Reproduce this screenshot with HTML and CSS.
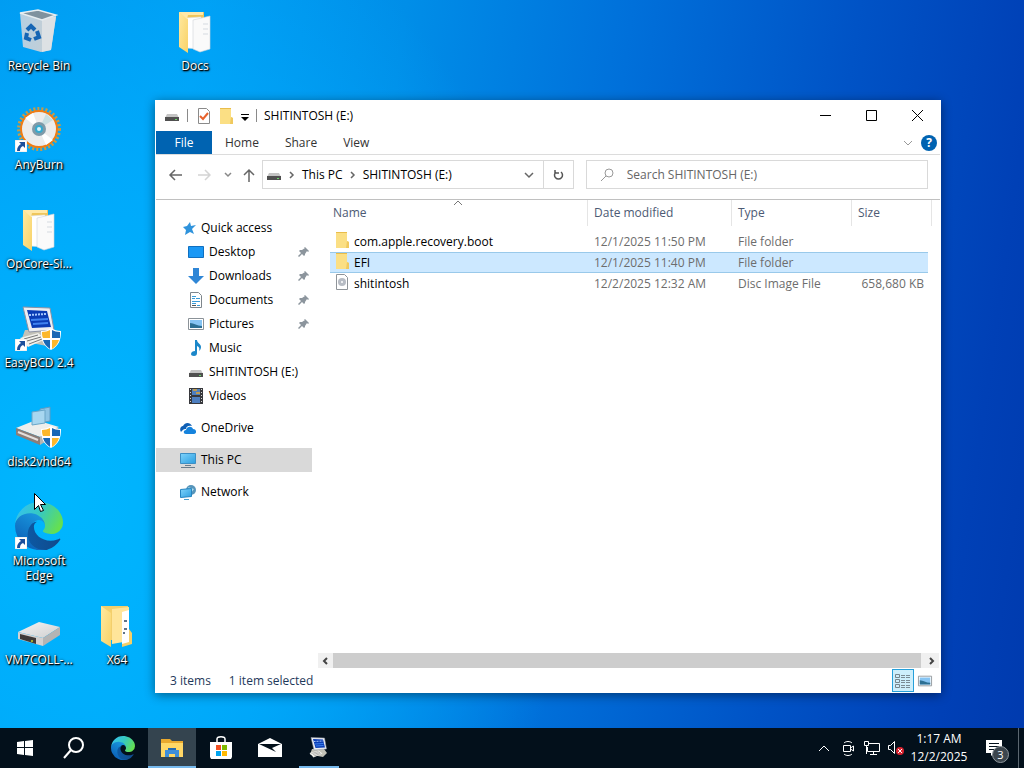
FILE: index.html
```html
<!DOCTYPE html>
<html lang="en">
<head>
    <meta charset="UTF-8">
    <meta name="viewport" content="width=device-width, initial-scale=1.0">
    <title>SHITINTOSH (E:)</title>
    <link rel="stylesheet" href="styles.css">
</head>
<body>

    <!-- Shared icons -->
    <svg class="sprite" aria-hidden="true">
        <defs>
            <linearGradient id="edgeBase" x1="0" y1="0" x2="1" y2="0"><stop offset="0" stop-color="#0c59a4"/><stop offset="1" stop-color="#114a8b"/></linearGradient>
            <linearGradient id="edgeLeft" x1="0.8" y1="0" x2="0.3" y2="1"><stop offset="0" stop-color="#1b9de2"/><stop offset="1" stop-color="#0a5db5"/></linearGradient>
            <linearGradient id="edgeTop" x1="0" y1="0.2" x2="1" y2="0.6"><stop offset="0" stop-color="#35c1f1"/><stop offset="0.5" stop-color="#36c9c0"/><stop offset="1" stop-color="#66e04e"/></linearGradient>
            <linearGradient id="folderFill" x1="0" y1="0" x2="1" y2="1"><stop offset="0" stop-color="#ffe9a0"/><stop offset="1" stop-color="#f8d267"/></linearGradient>
            <linearGradient id="binFill" x1="0" y1="0" x2="1" y2="0"><stop offset="0" stop-color="#b4cfe2"/><stop offset="1" stop-color="#c9ced1"/></linearGradient>
            <linearGradient id="screenFill" x1="0" y1="0" x2="1" y2="1"><stop offset="0" stop-color="#7fd3fb"/><stop offset="1" stop-color="#2b9ee0"/></linearGradient>
            <linearGradient id="driveTop" x1="0" y1="0" x2="1" y2="1"><stop offset="0" stop-color="#f4f4f4"/><stop offset="1" stop-color="#cfcfcf"/></linearGradient>
        </defs>

        <symbol id="edge" viewBox="0 0 256 256">
            <path fill="url(#edgeBase)" d="M235.7 195.5a93.7 93.7 0 0 1-10.6 4.7 101.9 101.9 0 0 1-35.9 6.4c-47.3 0-88.5-32.5-88.5-74.3a31.5 31.5 0 0 1 16.4-27.3c-42.8 1.8-53.8 46.4-53.8 72.5 0 74 68.1 81.4 82.8 81.4 7.9 0 19.8-2.3 27-4.6l1.3-.4a128.3 128.3 0 0 0 66.6-52.8 4 4 0 0 0-5.3-5.6z"/>
            <path fill="url(#edgeLeft)" d="M105.7 241.4a79.2 79.2 0 0 1-22.7-21.3 80.7 80.7 0 0 1 29.5-120c3.2-1.5 8.5-4.1 15.6-4a32.4 32.4 0 0 1 25.7 13 31.9 31.9 0 0 1 6.3 18.7c0-.2 24.5-79.6-80-79.6-43.9 0-80 41.6-80 78.2a130.2 130.2 0 0 0 12.1 56 128 128 0 0 0 156.4 67 75.5 75.5 0 0 1-62.8-8z"/>
            <path fill="url(#edgeTop)" d="M152.3 148.9c-.9 1-3.4 2.5-3.4 5.6 0 2.6 1.7 5.2 4.8 7.3 14.3 10 41.4 8.6 41.5 8.6a59.6 59.6 0 0 0 30.3-8.3 61.4 61.4 0 0 0 30.4-52.9c.3-22.4-8-37.3-11.3-43.9C223.5 23.9 177.7 0 128 0A128 128 0 0 0 0 126.2c.5-36.5 36.8-66 80-66 3.5 0 23.5.3 42 10a72.6 72.6 0 0 1 30.9 29.3c6.1 10.6 7.2 24.1 7.2 29.5s-2.7 13.3-7.8 19.9z"/>
        </symbol>
        <symbol id="shortcut" viewBox="0 0 12 12">
            <path fill="#fff" stroke="#c8c8c8" stroke-width="0.5" d="M0 0h12v12H0z"/>
            <path fill="#1c4f9c" d="M4 2h6v6L8 6C6 7 5 8 5 11H2C2 7 4 5 6 4z"/>
        </symbol>
        <symbol id="shield" viewBox="0 0 20 22">
            <path fill="#fff" d="M10 0c3 2 6 3 10 3 0 9-2 15-10 19C2 18 0 12 0 3c4 0 7-1 10-3z"/>
            <path fill="#1967b5" d="M11 2v8h8V4c-3 0-6-1-8-2zM9 12H2c1 4 4 7 7 9z"/>
            <path fill="#fcb72b" d="M9 2v8H2C1 8 1 6 1 4c3 0 6-1 8-2zM11 12h7c-1 4-4 7-7 9z"/>
        </symbol>
        <symbol id="doc-folder" viewBox="0 0 48 48">
            <path fill="#efc65c" d="M8 5h25v6H8z"/>
            <path fill="#fff" stroke="#dfe3e6" stroke-width="0.6" d="M15 11l15-1v32l-15-1z"/>
            <path fill="#fafafa" stroke="#d0d4d8" stroke-width="0.6" d="M22 13l17-4v33l-10 3-7-3z"/>
            <path stroke="#d5dae0" d="M32 17h5M32 22h5M32 27h5"/>
            <path fill="url(#folderFill)" d="M8 5l9 7v34l-9-6z"/>
            <path fill="#ffe9a8" d="M8 5h24v3H17l-1 4z"/>
        </symbol>
        <symbol id="small-folder" viewBox="0 0 16 16">
            <path fill="#e9bd4b" d="M2 0h11v15H2z"/>
            <path fill="#fbdf84" d="M2 1h11v8l2 1v6H2z"/>
            <path fill="#f0c95e" d="M13 9l2 1v6h-3z"/>
        </symbol>
        <symbol id="small-drive" viewBox="0 0 16 16">
            <path fill="#c4c4c4" d="M3 6h10l2 4H1z"/>
            <path fill="#505050" d="M1 9h14v4H1z"/>
            <path fill="#6bd86b" d="M11 11h2v1h-2z"/>
        </symbol>
        <symbol id="big-drive" viewBox="0 0 48 48">
            <path fill="url(#driveTop)" d="M3 31L24 21l21 5-17 11z"/>
            <path fill="#d4d1d0" d="M3 31l25 6v8L3 38z"/>
            <path fill="#3f3a38" d="M5 33l16 4v6L5 38z"/>
            <path fill="#b4b4b4" d="M28 37l17-11v8L28 45z"/>
            <circle cx="17" cy="40" r="1" fill="#c9d12e"/>
        </symbol>
        <symbol id="computer" viewBox="0 0 48 48">
            <path fill="#c3c2b8" d="M10 26h24l6 8-8 8-26-5z"/>
            <path fill="#f1f1ec" d="M5 34l18-5 8 6-18 8z"/>
            <path stroke="#777" d="M9 35l14-4M12 37l14-4M14 40l13-5"/>
            <path fill="#eceef2" stroke="#8b92a5" d="M8 3l27 1 4 22-25 2z"/>
            <path fill="#0a3cb5" d="M12 6l20 1 4 16-19 1z"/>
            <path stroke="#a9caff" stroke-width="2" stroke-dasharray="2 1" d="M14 11l17-1"/>
            <path stroke="#3f82f0" stroke-width="2" d="M16 16l17-1M18 20l15-1"/>
        </symbol>
        <symbol id="picture" viewBox="0 0 16 16">
            <path fill="#fff" stroke="#8b9298" d="M.5 2.500h15v11H.5z"/>
            <path fill="#86c4f3" d="M2 4h12v8H2z"/>
            <path fill="#2c6f93" d="M2 7c4 0 7 3 12 3v2H2z"/>
        </symbol>
        <symbol id="pin" viewBox="0 0 12 12">
            <path fill="#8c959d" d="M7 1l4 4-1 1-1-1-2 3v1l-1 1-2-2-3 3-1-1 3-3-2-2 1-1h2l3-2-1-1z"/>
        </symbol>
    </svg>

    <main class="desktop">
        <div class="desktop-icons">
            <button class="shortcut r1">
                <svg viewBox="0 0 48 48">
                    <path fill="url(#binFill)" d="M5 6l36 4-5 33-10 2-18-5z"/>
                    <path fill="#dde1e4" d="M27 13l14-4-5 34-9 2z"/>
                    <path fill="#7f929e" stroke="#e6edf0" stroke-width="1.500" d="M5 6l18-3 18 5-14 5z"/>
                    <g fill="none" stroke="#1565b4" stroke-width="4"><path d="M12 23l4-4 4 4M22 24l2 6-5 2M16 33l-5-2 1-5"/></g>
                </svg>
                <span>Recycle Bin</span>
            </button>
            <button class="shortcut r2">
                <svg viewBox="0 0 48 48">
                    <circle cx="24" cy="23" r="20" fill="none" stroke="#c99a45" stroke-width="4" stroke-dasharray="2 2"/>
                    <circle cx="24" cy="23" r="18" fill="#ececec" stroke="#f07c14" stroke-width="2"/>
                    <path fill="#fff" d="M24 23L10 12l8-5zM24 23l14 11-7 5z"/>
                    <path fill="#c9dfe2" d="M24 23l7-15 7 6z"/>
                    <circle cx="24" cy="23" r="7" fill="#7f9aa8"/>
                    <circle cx="24" cy="23" r="4" fill="#36a9cd"/>
                    <circle cx="24" cy="23" r="2" fill="#d8f2fa"/>
                    <use href="#shortcut" x="0" y="34" width="12" height="12"/>
                </svg>
                <span>AnyBurn</span>
            </button>
            <button class="shortcut r3">
                <svg><use href="#doc-folder"/></svg>
                <span>OpCore-Si...</span>
            </button>
            <button class="shortcut r4">
                <svg viewBox="0 0 48 48">
                    <use href="#computer" width="48" height="48"/>
                    <use href="#shield" x="26" y="24" width="20" height="22"/>
                    <use href="#shortcut" x="0" y="35" width="12" height="12"/>
                </svg>
                <span>EasyBCD 2.4</span>
            </button>
            <button class="shortcut r5">
                <svg viewBox="0 0 48 48">
                    <path fill="#eeeeec" d="M1 25l20-8 23 7-19 10z"/>
                    <path fill="#8b7d78" d="M1 25l24 9v8L1 32z"/>
                    <path stroke="#e5dfdc" stroke-width="2" d="M3 29l20 8"/>
                    <path fill="#b5b5b3" d="M25 34l18-10v7L25 42z"/>
                    <path fill="#8dc4e5" stroke="#5f9cc3" d="M25 6l10-2v14l-10 2z"/>
                    <path fill="#a8d7f0" stroke="#6aa6c8" d="M17 9l13-2v13l-13 2z"/>
                    <use href="#shield" x="26" y="23" width="20" height="22"/>
                </svg>
                <span>disk2vhd64</span>
            </button>
            <button class="shortcut r6">
                <svg viewBox="0 0 48 48">
                    <use href="#edge" width="48" height="48"/>
                    <use href="#shortcut" x="0" y="35" width="12" height="12"/>
                </svg>
                <span>Microsoft Edge</span>
            </button>
            <button class="shortcut r7">
                <svg><use href="#big-drive"/></svg>
                <span>VM7COLL-...</span>
            </button>
            <button class="shortcut r7 c2">
                <svg viewBox="0 0 48 48">
                    <path fill="#f3cf6c" d="M8 5h27v34H8z"/>
                    <path fill="#ffe59a" d="M19 8l17-2v34l-17 3z"/>
                    <path fill="#fff" d="M29 11l7-2v34l-7 2z"/>
                    <path stroke="#5f7388" stroke-width="2" d="M31 20h3M31 28h3M30 32h2"/>
                    <path fill="#f6cf67" d="M36 28l3 4v11l-10 3v-3l7-2z"/>
                    <path fill="url(#folderFill)" d="M8 5l10 7v34l-10-6z"/>
                </svg>
                <span>X64</span>
            </button>
            <button class="shortcut r1 c3">
                <svg><use href="#doc-folder"/></svg>
                <span>Docs</span>
            </button>
        </div>

        <section class="window" aria-label="SHITINTOSH (E:)">
            <header class="titlebar">
                <svg class="icon16"><use href="#small-drive"/></svg>
                <span class="divider"></span>
                <button class="quick" aria-label="Properties">
                    <svg viewBox="0 0 16 16"><path fill="#fff" stroke="#8a8a8a" d="M3.500.5h8l3 3v12h-11z"/><path fill="none" stroke="#e8622c" stroke-width="2" d="M5 8l3 3 5-6"/></svg>
                </button>
                <button class="quick" aria-label="New folder"><svg><use href="#small-folder"/></svg></button>
                <button class="quick narrow" aria-label="Customize Quick Access Toolbar">
                    <svg viewBox="0 0 8 16"><path d="M0 6h8v1H0zM0 9h8l-4 4z"/></svg>
                </button>
                <span class="divider"></span>
                <h1>SHITINTOSH (E:)</h1>
                <div class="window-buttons">
                    <button aria-label="Minimize"><svg viewBox="0 0 11 11"><path d="M0 5.500h11"/></svg></button>
                    <button aria-label="Maximize"><svg viewBox="0 0 11 11"><path d="M.5.5h10v10H.5z"/></svg></button>
                    <button aria-label="Close"><svg viewBox="0 0 11 11"><path d="M0 0l11 11M11 0L0 11"/></svg></button>
                </div>
            </header>

            <nav class="ribbon">
                <button class="file-tab">File</button>
                <button>Home</button>
                <button>Share</button>
                <button>View</button>
                <div class="ribbon-end">
                    <button aria-label="Expand the Ribbon"><svg class="chevron" viewBox="0 0 10 10"><path d="M1 3l4 4 4-4"/></svg></button>
                    <button class="help" aria-label="Help">?</button>
                </div>
            </nav>

            <div class="navbar">
                <div class="history">
                    <button aria-label="Back"><svg viewBox="0 0 16 16"><path d="M15 8H3M8 3L3 8l5 5"/></svg></button>
                    <button class="off" aria-label="Forward" disabled><svg viewBox="0 0 16 16"><path d="M3 8h12M10 3l5 5-5 5"/></svg></button>
                    <button class="recent" aria-label="Recent locations"><svg viewBox="0 0 16 16"><path d="M6 6l3 3 3-3"/></svg></button>
                    <button aria-label="Up"><svg viewBox="0 0 16 16"><path d="M8 15V3M3 8l5-5 5 5"/></svg></button>
                </div>
                <div class="address">
                    <svg class="icon16"><use href="#small-drive"/></svg>
                    <svg class="chevron" viewBox="0 0 10 10"><path d="M3 2l3 3-3 3"/></svg>
                    <button>This PC</button>
                    <svg class="chevron" viewBox="0 0 10 10"><path d="M3 2l3 3-3 3"/></svg>
                    <button>SHITINTOSH (E:)</button>
                    <button class="drop" aria-label="Previous locations"><svg class="chevron" viewBox="0 0 10 10"><path d="M1 3l4 4 4-4"/></svg></button>
                    <button class="refresh" aria-label="Refresh"><svg viewBox="0 0 14 14"><path d="M5 4a4 4 0 1 0 5 0M4 2v3h4"/></svg></button>
                </div>
                <label class="search">
                    <svg viewBox="0 0 16 16"><circle cx="10" cy="6" r="4"/><path d="M7 9l-5 5"/></svg>
                    <input type="text" placeholder="Search SHITINTOSH (E:)" aria-label="Search SHITINTOSH (E:)">
                </label>
            </div>

            <div class="content">
                <ul class="sidebar">
                    <li>
                        <svg viewBox="0 0 16 16"><path fill="#2f93dc" d="M10 2l1 4 5-1-4 4 2 5-4-2-5 3 1-5-3-3 4-1z"/></svg>
                        <a href="#">Quick access</a>
                    </li>
                    <li class="child">
                        <svg viewBox="0 0 16 16"><path fill="#1a98f5" stroke="#0f6fc0" d="M.5 2.500h15v11H.5z"/></svg>
                        <a href="#">Desktop</a><svg class="pin"><use href="#pin"/></svg>
                    </li>
                    <li class="child">
                        <svg viewBox="0 0 16 16"><path fill="#2f86d6" d="M5 0h6v8h5l-8 8-8-8h5z"/></svg>
                        <a href="#">Downloads</a><svg class="pin"><use href="#pin"/></svg>
                    </li>
                    <li class="child">
                        <svg viewBox="0 0 16 16"><path fill="#fff" stroke="#7e868c" d="M2.500.5h8l3 3v12h-11z"/><path stroke="#3b9cd8" d="M4 4.500h4M8 6.500h4M4 6.500h3M4 9.500h8M4 11.500h4M9 13.500h3"/><path fill="#555" d="M4 13h4v1H4z"/></svg>
                        <a href="#">Documents</a><svg class="pin"><use href="#pin"/></svg>
                    </li>
                    <li class="child">
                        <svg><use href="#picture"/></svg>
                        <a href="#">Pictures</a><svg class="pin"><use href="#pin"/></svg>
                    </li>
                    <li class="child">
                        <svg viewBox="0 0 16 16"><path fill="#1b87c9" d="M7 0h2c0 3 4 4 4 7 0 2-1 3-2 4 1-3 0-4-2-5v7c0 2-1 3-3 3s-3-1-3-2c0-2 2-3 4-3z"/></svg>
                        <a href="#">Music</a>
                    </li>
                    <li class="child">
                        <svg><use href="#small-drive"/></svg>
                        <a href="#">SHITINTOSH (E:)</a>
                    </li>
                    <li class="child">
                        <svg viewBox="0 0 16 16"><path fill="#37383c" d="M1 0h14v16H1z"/><path fill="#4d7ec0" d="M4 1h8v6H4zM4 9h8v6H4z"/><path fill="#bb9b55" d="M5 1h4v2H5zM8 4h4v2H8z"/><path stroke="#d6d6d6" stroke-dasharray="1 2" d="M2.500 1v15M13.500 1v15"/></svg>
                        <a href="#">Videos</a>
                    </li>
                    <li class="group">
                        <svg viewBox="0 0 16 16"><path fill="#0e5fb5" d="M1 12c-2-3 0-6 2-6 2-4 7-4 9 0-4-1-6 1-6 3-3 0-3 1-5 3z"/><path fill="#1583dd" d="M6 14c-3 0-3-4 0-4 1-4 6-4 7-1 4 0 4 5 1 5z"/></svg>
                        <a href="#">OneDrive</a>
                    </li>
                    <li class="group current">
                        <svg viewBox="0 0 16 16"><path fill="url(#screenFill)" stroke="#3d8fc4" d="M.5 1.500h15v10H.5z"/><path stroke="#687c8c" d="M5 13.500h6M1 15.500h14"/></svg>
                        <a href="#">This PC</a>
                    </li>
                    <li class="group">
                        <svg viewBox="0 0 16 16"><circle cx="11" cy="6" r="5" fill="#5795ba"/><path fill="#b2ddee" d="M8 3l6 2-3 4z"/><path fill="url(#screenFill)" stroke="#2684c0" d="M.5 5.500l11-1v8l-11 1z"/><path stroke="#4a9ed0" d="M4 15.500h5"/></svg>
                        <a href="#">Network</a>
                    </li>
                </ul>

                <div class="files">
                    <table>
                        <colgroup>
                            <col>
                            <col class="col-date">
                            <col class="col-type">
                            <col class="col-size">
                            <col class="col-end">
                        </colgroup>
                        <thead>
                            <tr>
                                <th>Name<svg class="sort" viewBox="0 0 10 6"><path d="M1 5l4-4 4 4"/></svg></th>
                                <th>Date modified</th>
                                <th>Type</th>
                                <th colspan="2">Size</th>
                            </tr>
                        </thead>
                        <tbody>
                            <tr>
                                <td><svg><use href="#small-folder"/></svg>com.apple.recovery.boot</td>
                                <td>12/1/2025 11:50 PM</td>
                                <td>File folder</td>
                                <td></td>
                                <td></td>
                            </tr>
                            <tr class="selected">
                                <td><svg><use href="#small-folder"/></svg>EFI</td>
                                <td>12/1/2025 11:40 PM</td>
                                <td>File folder</td>
                                <td></td>
                                <td></td>
                            </tr>
                            <tr>
                                <td><svg viewBox="0 0 16 16"><path fill="#fff" stroke="#8f9499" d="M2.500.5h8l3 3v12h-11z"/><circle cx="8" cy="8" r="4" fill="#b7bcc4"/><circle cx="8" cy="8" r="1" fill="#fff"/></svg>shitintosh</td>
                                <td>12/2/2025 12:32 AM</td>
                                <td>Disc Image File</td>
                                <td>658,680 KB</td>
                                <td></td>
                            </tr>
                        </tbody>
                    </table>
                    <div class="scrollbar">
                        <button aria-label="Scroll left"><svg viewBox="0 0 10 10"><path d="M6 2L3 5l3 3"/></svg></button>
                        <div class="thumb"></div>
                        <button aria-label="Scroll right"><svg viewBox="0 0 10 10"><path d="M3 2l3 3-3 3"/></svg></button>
                    </div>
                </div>
            </div>

            <footer class="statusbar">
                <span>3 items</span>
                <span>1 item selected</span>
                <div class="views">
                    <button class="active" aria-label="Details view">
                        <svg viewBox="0 0 16 14"><path fill="none" stroke="#77858c" d="M.5.5h4v3h-4zM.5 5.500h4v3h-4zM.5 10.500h4v3h-4z"/><path stroke="#7b8b94" stroke-dasharray="4 1" d="M6 1.500h10M6 3.500h10M6 6.500h10M6 8.500h10M6 11.500h10M6 13.500h10"/></svg>
                    </button>
                    <button aria-label="Large icons view"><svg><use href="#picture"/></svg></button>
                </div>
            </footer>
        </section>

        <svg class="cursor" viewBox="0 0 12 19" aria-hidden="true"><path fill="#fff" stroke="#000" d="M.5.5v16l4-4 2 6 3-1-3-6h5z"/></svg>
    </main>

    <footer class="taskbar">
        <button aria-label="Start"><svg viewBox="0 0 16 16"><path fill="#fff" d="M0 2l7-1v6H0zM8 1l8-1v7H8zM0 8h7v7l-7-1zM8 8h8v8l-8-1z"/></svg></button>
        <button class="large" aria-label="Search"><svg viewBox="0 0 24 24"><circle cx="14" cy="9" r="7" fill="none" stroke="#fff" stroke-width="2"/><path stroke="#fff" stroke-width="2" d="M9 14l-7 8"/></svg></button>
        <button class="large" aria-label="Microsoft Edge"><svg><use href="#edge"/></svg></button>
        <button class="large current" aria-label="File Explorer">
            <svg viewBox="0 0 24 24"><path fill="#e9a92e" d="M1 3h9l2 2h11v16H1z"/><path fill="#ffd766" d="M1 7h22v14H1z"/><path fill="#3f8fdb" d="M5 14h14v7h-4v-3H9v3H5z"/><path fill="#2469b0" d="M8 12h8v2H8z"/></svg>
        </button>
        <button class="large" aria-label="Microsoft Store">
            <svg viewBox="0 0 24 24"><path fill="none" stroke="#fff" stroke-width="1.500" d="M8 6V3c0-3 8-3 8 0v3"/><path fill="#fff" d="M1 6h22v15l-1 2H2l-1-2z"/><path fill="#f25022" d="M7 9h5v5H7z"/><path fill="#7fba00" d="M13 9h5v5h-5z"/><path fill="#00a4ef" d="M7 15h5v5H7z"/><path fill="#ffb900" d="M13 15h5v5h-5z"/></svg>
        </button>
        <button class="large" aria-label="Mail"><svg viewBox="0 0 24 24"><path fill="#fff" d="M0 8l12-6 12 6v13H0z"/><path fill="#03101b" d="M1 8h22l-9 4 4 4z"/></svg></button>
        <button class="large open" aria-label="EasyBCD"><svg><use href="#computer"/></svg></button>

        <div class="tray">
            <button aria-label="Show hidden icons"><svg viewBox="0 0 16 16"><path d="M3 11l5-5 5 5"/></svg></button>
            <button aria-label="Meet Now"><svg viewBox="0 0 16 16"><path d="M3.500 5.500h7v6h-7zM10.500 8l3-2v5l-3-2M4 3c2-2 6-2 8 0M4 14c2 2 6 2 8 0"/></svg></button>
            <button aria-label="Network"><svg viewBox="0 0 16 16"><path d="M5 3.500h10.500v8H3.500V7M6 14.500h7M9.500 12v2M.5 1.500h4v4h-4zM2.500 6v8"/></svg></button>
            <button aria-label="Volume">
                <svg viewBox="0 0 16 16"><path d="M.5 5.500h2l4-4v12l-4-4h-2z"/><circle class="mute" cx="12" cy="11" r="4"/><path d="M10 9l4 4M14 9l-4 4"/></svg>
            </button>
            <button class="clock"><time>1:17 AM</time><time>12/2/2025</time></button>
            <button class="notifications" aria-label="Notifications">
                <svg viewBox="0 0 18 18"><path fill="#fff" stroke="none" d="M1 1h16v13H9l-3 3v-3H1z"/><path stroke="#03101b" d="M4 4.500h10M4 7.500h10M4 10.500h7"/></svg>
                <span class="badge">3</span>
            </button>
            <button class="show-desktop" aria-label="Show desktop"></button>
        </div>
    </footer>

</body>
</html>
```
FILE: styles.css
```css
* {
    box-sizing: border-box;
}

body {
    margin: 0;
    height: 100vh;
    display: flex;
    flex-direction: column;
    font: 12px/16px "Open Sans", "Noto Sans", sans-serif;
    color: #000;
    overflow: hidden;
    background: linear-gradient(98deg, #0093ec 0%, #009cf2 18%, #008ee8 36%, #0070da 56%, #0053c6 76%, #0040b6 92%, #003aae 100%);
}

button {
    font: inherit;
    color: inherit;
    background: none;
    border: 0;
    padding: 0;
    cursor: default;
}

svg {
    display: block;
    flex: none;
}

.sprite {
    position: absolute;
    width: 0;
    height: 0;
}

.icon16 {
    width: 16px;
    height: 16px;
}

/* Desktop */
.desktop {
    position: relative;
    flex: 1;
    min-height: 0;
    background: radial-gradient(ellipse 50% 90% at 6% 68%, rgba(0, 184, 255, 0.95), rgba(0, 176, 255, 0.7) 50%, rgba(0, 160, 255, 0));
}

.desktop-icons {
    display: grid;
    grid-template-columns: repeat(auto-fill, 78px);
    grid-template-rows: repeat(7, 99px);
}

.shortcut {
    grid-column: 1;
    display: flex;
    flex-direction: column;
    align-items: center;
    gap: 3px;
    padding-top: 7px;
    line-height: 15px;
    color: #fff;
    text-shadow: 1px 1px 1px #000, 1px 1px 2px #000, 0 0 3px rgba(0, 0, 0, 0.7);
}

.shortcut svg {
    width: 48px;
    height: 48px;
}

.r1 { grid-row: 1; }
.r2 { grid-row: 2; }
.r3 { grid-row: 3; }
.r4 { grid-row: 4; }
.r5 { grid-row: 5; }
.r6 { grid-row: 6; }
.r7 { grid-row: 7; }
.c2 { grid-column: 2; }
.c3 { grid-column: 3; }

.cursor {
    position: absolute;
    left: 34px;
    top: 493px;
    width: 12px;
    height: 19px;
}

/* Explorer window */
.window {
    position: absolute;
    left: 155px;
    top: 100px;
    right: 83px;
    bottom: 35px;
    display: flex;
    flex-direction: column;
    padding: 0 1px;
    background: #fff;
    box-shadow: 0 2px 10px rgba(0, 0, 0, 0.45);
}

.titlebar {
    display: flex;
    align-items: center;
    gap: 7px;
    height: 31px;
    padding-left: 8px;
}

.titlebar h1 {
    margin: 0;
    font-size: 12px;
    font-weight: normal;
}

.divider {
    width: 1px;
    height: 13px;
    background: #8a8a8a;
}

.quick svg {
    width: 16px;
    height: 16px;
}

.quick.narrow svg {
    width: 8px;
}

.window-buttons {
    display: flex;
    align-self: stretch;
    margin-left: auto;
}

.window-buttons button {
    width: 46px;
    display: grid;
    place-items: center;
}

.window-buttons svg {
    width: 11px;
    height: 11px;
    fill: none;
    stroke: #000;
}

.ribbon {
    display: flex;
    height: 24px;
    border-bottom: 1px solid #dcdcdc;
    color: #333;
}

.ribbon button {
    padding: 0 13px;
}

.ribbon .file-tab {
    width: 56px;
    background: #0063b1;
    color: #fff;
}

.ribbon-end {
    display: flex;
    align-items: center;
    gap: 8px;
    margin-left: auto;
    padding-right: 3px;
}

.ribbon-end button {
    padding: 0;
}

.ribbon-end .help {
    width: 16px;
    height: 16px;
    border-radius: 50%;
    background: #0063b1;
    color: #fff;
    font-weight: bold;
    line-height: 16px;
}

.chevron {
    width: 10px;
    height: 10px;
    fill: none;
    stroke: #666;
    stroke-width: 2;
}

.address .chevron {
    stroke-width: 1.5;
}

.ribbon-end .chevron {
    stroke: #999;
    stroke-width: 1;
}

.navbar {
    display: flex;
    gap: 12px;
    height: 45px;
    padding: 5px 12px 10px 11px;
    border-bottom: 1px solid #c0c0c0;
}

.history {
    display: flex;
    align-items: center;
    gap: 12px;
    margin-right: -7px;
}

.history svg {
    width: 16px;
    height: 16px;
    fill: none;
    stroke: #666;
    stroke-width: 1.5;
}

.history .off svg {
    stroke: #d4d4d4;
}

.history .recent {
    margin: 0 -6px 0 -4px;
}

.history .recent svg {
    stroke: #888;
}

.address {
    flex: 314;
    display: flex;
    align-items: center;
    gap: 5px;
    padding-left: 3px;
    border: 1px solid #d9d9d9;
    white-space: nowrap;
}

.address .drop {
    margin-left: auto;
    margin-right: 4px;
}

.refresh {
    display: grid;
    place-items: center;
    align-self: stretch;
    width: 30px;
    border-left: 1px solid #d9d9d9;
}

.refresh svg {
    width: 14px;
    height: 14px;
    fill: none;
    stroke: #555;
    stroke-width: 1.5;
}

.search {
    flex: 336;
    display: flex;
    align-items: center;
    gap: 12px;
    padding-left: 12px;
    border: 1px solid #d9d9d9;
}

.search svg {
    width: 16px;
    height: 16px;
    fill: none;
    stroke: #999;
}

.search input {
    flex: 1;
    min-width: 0;
    border: 0;
    padding: 0;
    outline: none;
    font: inherit;
}

.search input::placeholder {
    color: #666;
    opacity: 1;
}

/* Navigation pane and file list */
.content {
    flex: 1;
    min-height: 0;
    display: flex;
}

.sidebar {
    width: 162px;
    margin: 0;
    padding: 16px 6px 0 0;
    list-style: none;
}

.sidebar li {
    display: flex;
    align-items: center;
    gap: 5px;
    height: 24px;
    padding-left: 24px;
}

.sidebar li.child {
    padding-left: 32px;
}

.sidebar li.group {
    margin-top: 8px;
}

.sidebar li.current {
    background: #d9d9d9;
}

.sidebar svg {
    width: 16px;
    height: 16px;
}

.sidebar .pin {
    width: 12px;
    height: 12px;
    margin-left: auto;
    margin-right: 2px;
}

.sidebar a {
    color: #000;
    text-decoration: none;
    white-space: nowrap;
}

.files {
    flex: 1;
    min-width: 0;
    display: flex;
    flex-direction: column;
    justify-content: space-between;
}

table {
    width: auto;
    margin: 0 8px 0 12px;
    table-layout: fixed;
    border-collapse: separate;
    border-spacing: 0;
    white-space: nowrap;
}

.col-date {
    width: 144px;
}

.col-type {
    width: 120px;
}

.col-size {
    width: 76px;
}

.col-end {
    width: 4px;
}

th {
    position: relative;
    height: 26px;
    padding: 0 6px;
    border-right: 1px solid #e5e5e5;
    font-weight: normal;
    text-align: left;
    color: #4c5a74;
}

th:first-child {
    padding-left: 3px;
}

.sort {
    position: absolute;
    left: 50%;
    top: 0;
    width: 10px;
    height: 6px;
    margin-left: -6px;
    fill: none;
    stroke: #777;
}

tbody::before {
    content: "";
    display: block;
    height: 5px;
}

td {
    height: 21px;
    padding: 0 6px;
    border: solid transparent;
    border-width: 1px 0;
    line-height: 19px;
    color: #6d6d6d;
}

td:first-child {
    padding-left: 4px;
    color: #000;
}

td:nth-child(4) {
    padding-right: 4px;
    text-align: right;
}

td:last-child {
    padding: 0;
}

td svg {
    display: inline-block;
    width: 16px;
    height: 16px;
    margin-right: 4px;
    vertical-align: top;
}

.selected td:not(:last-child) {
    background: #cce8ff;
    border-color: #99c9ea;
}

.scrollbar {
    display: flex;
    height: 15px;
    margin-right: 1px;
    background: #f0f0f0;
}

.scrollbar button {
    width: 15px;
    display: grid;
    place-items: center;
}

.scrollbar svg {
    width: 10px;
    height: 10px;
    fill: none;
    stroke: #444;
    stroke-width: 2;
}

.thumb {
    flex: 1;
    margin-right: 3px;
    background: #cdcdcd;
}

.statusbar {
    display: flex;
    align-items: center;
    gap: 18px;
    height: 25px;
    padding: 0 4px 0 14px;
    color: #1e395b;
}

.views {
    display: flex;
    margin-left: auto;
}

.views button {
    display: grid;
    place-items: center;
    width: 22px;
    height: 23px;
    border: 1px solid transparent;
}

.views .active {
    background: #cdeefb;
    border-color: #26a0da;
}

.views svg {
    width: 16px;
    height: 14px;
}

/* Taskbar */
.taskbar {
    display: flex;
    gap: 1px;
    height: 40px;
    padding-left: 1px;
    background: #03101b;
    color: #fff;
}

.taskbar > button {
    display: grid;
    place-items: center;
    width: 48px;
}

.taskbar > button svg {
    width: 16px;
    height: 16px;
}

.taskbar > .large svg {
    width: 24px;
    height: 24px;
}

.taskbar > .current {
    background: #34444f;
    box-shadow: inset 0 -2px #76b9ed;
}

.taskbar > .open {
    background: linear-gradient(#76b9ed, #76b9ed) bottom / 40px 2px no-repeat;
}

.tray {
    display: flex;
    margin-left: auto;
}

.tray button {
    display: grid;
    place-items: center;
    width: 24px;
}

.tray svg {
    width: 16px;
    height: 16px;
    fill: none;
    stroke: #fff;
}

.tray .mute {
    fill: #d8232f;
    stroke: none;
}

.tray .clock {
    width: 62px;
    align-content: center;
    line-height: 18px;
}

.tray .notifications {
    position: relative;
    width: 48px;
}

.tray .notifications svg {
    width: 18px;
    height: 18px;
}

.badge {
    position: absolute;
    left: 22px;
    top: 18px;
    width: 17px;
    height: 17px;
    border: 1px solid #8f979d;
    border-radius: 50%;
    background: #3c464e;
    font-size: 11px;
    line-height: 15px;
}

.tray .show-desktop {
    width: 6px;
    border-left: 1px solid #5a6670;
}
```
